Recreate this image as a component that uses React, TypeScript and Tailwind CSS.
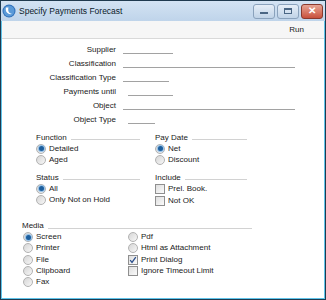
const font = { fontFamily: '"Liberation Sans", Arial, sans-serif' }

function Radio({ on }: { on?: boolean }) {
  return (
    <span className="flex h-[10px] w-[10px] shrink-0 items-center justify-center rounded-full border border-[#b2b2b2] bg-gradient-to-br from-[#d6d6d6] to-[#f7f7f7]">
      {on && <span className="h-[5px] w-[5px] rounded-full bg-[#1d5f9e] shadow-[0_0_1px_1px_#8cbde8]" />}
    </span>
  )
}

function Check({ on }: { on?: boolean }) {
  return (
    <span className="flex h-[10px] w-[10px] shrink-0 items-center justify-center border border-[#8f8f8f] bg-gradient-to-br from-[#dedede] to-[#fbfbfb]">
      {on && (
        <svg width="8" height="8" viewBox="0 0 8 8">
          <path d="M1.2 4.2 L3 6.4 L6.8 1.2" fill="none" stroke="#2b4f8c" strokeWidth="1.3" />
        </svg>
      )}
    </span>
  )
}

function Opt({ label, on, box, h = 'h-[11px]' }: { label: string; on?: boolean; box?: boolean; h?: string }) {
  return (
    <div className={`flex items-center gap-[3px] ${h}`}>
      {box ? <Check on={on} /> : <Radio on={on} />}
      <span>{label}</span>
    </div>
  )
}

function Head({ label, w }: { label: string; w: string }) {
  return (
    <div className={`flex h-[11px] items-center gap-[4px] ${w}`}>
      <span>{label}</span>
      <span className="mt-[4px] h-px flex-1 bg-[#d2d2d2]" />
    </div>
  )
}

function Field({ label, w, indent }: { label: string; w: string; indent?: boolean }) {
  return (
    <div className="flex h-[14px] items-center">
      <span className="w-[114px] text-right">{label}</span>
      <span className={`h-[8px] border-b border-[#a2a2a2] ${indent ? 'ml-[12px]' : 'ml-[7px]'} ${w}`} />
    </div>
  )
}

export default function App() {
  return (
    <div style={font} className="flex h-[300px] w-[326px] flex-col border border-[#1f3a4f] bg-[#c5d9ee] text-[8px] text-[#1a1a1a]">
      <div className="flex h-[20px] items-center bg-gradient-to-b from-[#d3e3f3] to-[#bfd4ea] pl-[1px]">
        <svg width="14" height="14" viewBox="0 0 14 14">
          <circle cx="7" cy="7" r="6.5" fill="#2f6fb8" />
          <circle cx="7" cy="7" r="5.5" fill="#5a9ad8" />
          <path d="M4 3.5 C3 7 5 11 10.5 10 C7 9.5 5.5 7 6.5 3.5 Z" fill="#fff" />
        </svg>
        <span className="ml-[3px] text-[8.5px] text-[#0b1a2a]">Specify Payments Forecast</span>
        <div className="ml-auto mr-[2px] flex gap-[2px]">
          <span className="flex h-[15px] w-[22px] items-center justify-center rounded-[3px] border border-[#8aa2bc] bg-gradient-to-b from-[#e6eef7] to-[#c0d3e7]">
            <span className="mt-[4px] h-[2px] w-[8px] bg-[#4a6684]" />
          </span>
          <span className="flex h-[15px] w-[22px] items-center justify-center rounded-[3px] border border-[#8aa2bc] bg-gradient-to-b from-[#e6eef7] to-[#c0d3e7]">
            <span className="h-[6px] w-[8px] border border-t-2 border-[#4a6684]" />
          </span>
          <span className="flex h-[15px] w-[22px] items-center justify-center rounded-[3px] border border-[#8a3a2e] bg-gradient-to-b from-[#e6a494] to-[#c8503c]">
            <span className="text-[10px] font-bold leading-none text-white">✕</span>
          </span>
        </div>
      </div>
      <div className="flex flex-1 flex-col border border-t-0 border-[#5fc4ea] bg-white">
        <div className="flex h-[18px] items-center justify-end border-b border-[#d9d9d9] bg-[#f6f6f6] pr-[20px]">
          <span>Run</span>
        </div>
        <div className="pt-[4px]">
          <Field label="Supplier" w="w-[50px]" />
          <Field label="Classification" w="w-[172px]" />
          <Field label="Classification Type" w="w-[46px]" />
          <Field label="Payments until" w="w-[45px]" indent />
          <Field label="Object" w="w-[172px]" />
          <Field label="Object Type" w="w-[27px]" indent />
        </div>
        <div className="mt-[5px] flex pl-[34px]">
          <div className="flex w-[119px] flex-col">
            <Head label="Function" w="w-[104px]" />
            <Opt label="Detailed" on />
            <Opt label="Aged" />
            <div className="mt-[7px]">
              <Head label="Status" w="w-[104px]" />
            </div>
            <Opt label="All" on />
            <Opt label="Only Not on Hold" />
          </div>
          <div className="flex flex-col">
            <Head label="Pay Date" w="w-[92px]" />
            <Opt label="Net" on />
            <Opt label="Discount" />
            <div className="mt-[7px]">
              <Head label="Include" w="w-[92px]" />
            </div>
            <Opt label="Prel. Book." box />
            <div className="mt-[1px]">
              <Opt label="Not OK" box />
            </div>
          </div>
        </div>
        <div className="mt-[14.5px] pl-[20px]">
          <Head label="Media" w="w-[230px]" />
          <div className="flex">
            <div className="flex w-[106px] flex-col pl-[1px]">
              <Opt label="Screen" on h="h-[11.3px]" />
              <Opt label="Printer" h="h-[11.3px]" />
              <Opt label="File" h="h-[11.3px]" />
              <Opt label="Clipboard" h="h-[11.3px]" />
              <Opt label="Fax" h="h-[11.3px]" />
            </div>
            <div className="flex flex-col">
              <Opt label="Pdf" h="h-[11.3px]" />
              <Opt label="Html as Attachment" h="h-[11.3px]" />
              <Opt label="Print Dialog" box on h="h-[11.3px]" />
              <Opt label="Ignore Timeout Limit" box h="h-[11.3px]" />
            </div>
          </div>
        </div>
      </div>
    </div>
  )
}
